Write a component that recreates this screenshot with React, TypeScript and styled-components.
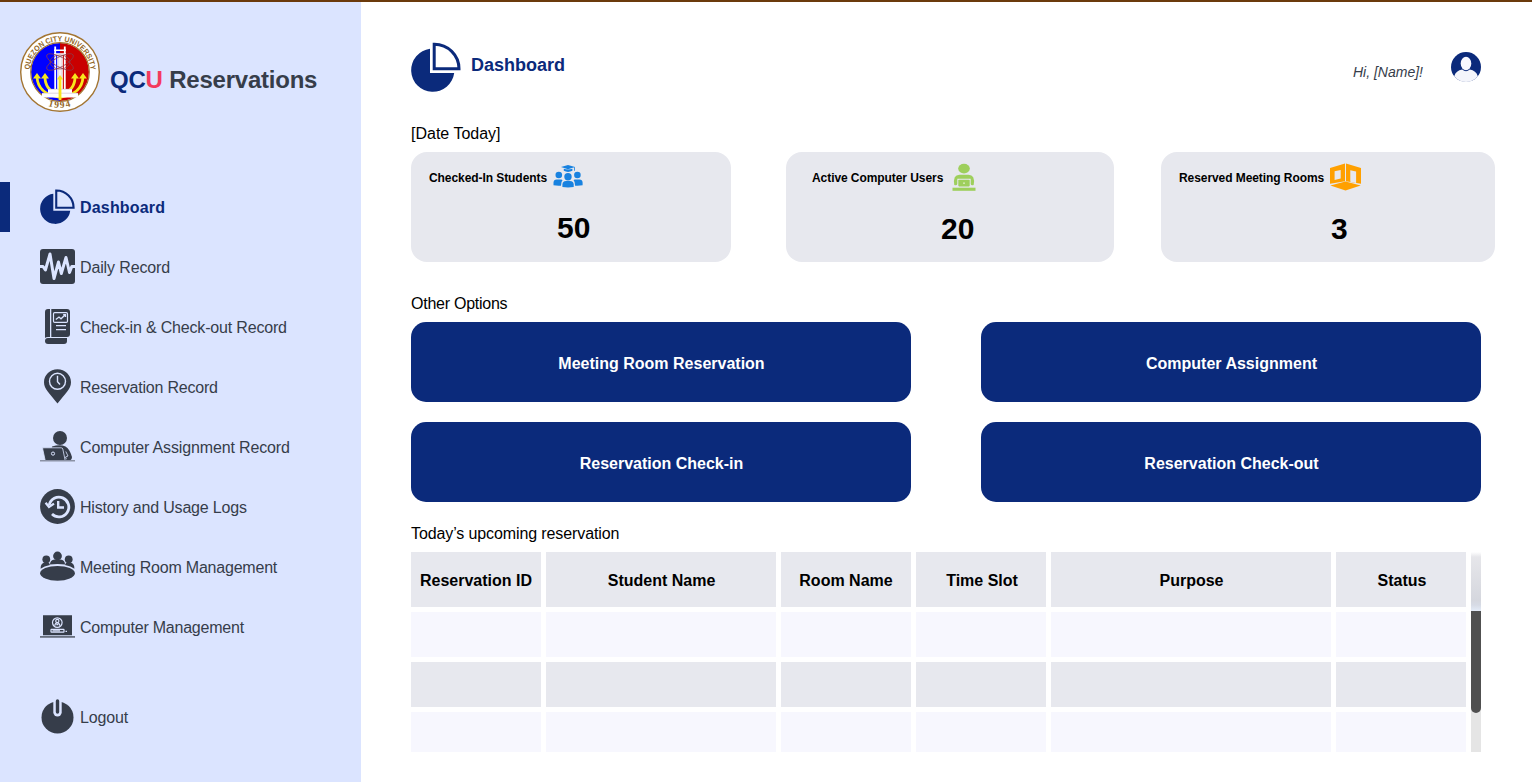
import React from "react";
import styled, { createGlobalStyle, css } from "styled-components";

const navy = "#0b2a7b";
const slate = "#363d4a";
const pale = "#dbe4ff";
const grey = "#e7e8ee";

const GlobalStyle = createGlobalStyle`
  * { box-sizing: border-box; }
  body {
    margin: 0;
    background: #fff;
    font-family: "Liberation Sans", Arial, sans-serif;
    font-size: 16px;
    line-height: 18px;
    color: #000;
    overflow: hidden;
  }
  svg { display: block; flex: none; }
`;

const Page = styled.div`
  display: flex;
  height: 782px;
  border-top: 2px solid #6b3a0c;
`;

const Sidebar = styled.aside`
  width: 361px;
  flex: none;
  background: ${pale};
`;

const Brand = styled.div`
  display: flex;
  align-items: flex-start;
  gap: 10px;
  padding: 30px 0 0 20px;
  height: 180px;
`;

const BrandName = styled.h1`
  margin: 34px 0 0;
  font-size: 24px;
  line-height: 28px;
  font-weight: bold;
  letter-spacing: -0.22px;
  color: ${slate};
  white-space: nowrap;
`;

const Tint = styled.span<{ $color: string }>`
  color: ${(p) => p.$color};
`;

const Nav = styled.nav`
  display: flex;
  flex-direction: column;
  gap: 10px;
`;

const NavItem = styled.a<{ $active?: boolean; $last?: boolean }>`
  display: flex;
  align-items: center;
  gap: 5px;
  height: 50px;
  color: ${slate};
  border-left: 10px solid transparent;
  padding-left: 30px;
  white-space: nowrap;
  ${(p) =>
    p.$active &&
    css`
      color: ${navy};
      font-weight: bold;
      border-left-color: ${navy};
    `}
  ${(p) => p.$last && css`margin-top: 30px;`}

  svg {
    margin-bottom: 1px;
  }
`;

const NavLabel = styled.span<{ $tracking: number }>`
  padding-top: 2px;
  letter-spacing: ${(p) => p.$tracking}px;
`;

const Main = styled.main`
  flex: 1;
  padding: 40px 0 0 50px;
`;

const TopBar = styled.header`
  display: flex;
  width: 1070px;
  height: 82px;
`;

const PageTitle = styled.h2`
  margin: 13px 0 0 10px;
  font-size: 18px;
  line-height: 21px;
  color: ${navy};
`;

const Greeting = styled.span`
  margin: 22px 28px 0 auto;
  font-size: 14px;
  line-height: 16px;
  font-style: italic;
  color: ${slate};
`;

const Avatar = styled.div`
  margin-top: 10px;
`;

const SectionLabel = styled.p<{ $top?: number; $tracking?: number }>`
  margin: ${(p) => p.$top ?? 0}px 0 0;
  height: 28px;
  padding-top: 1px;
  letter-spacing: ${(p) => p.$tracking ?? 0}px;
`;

const Stats = styled.div`
  display: grid;
  grid-template-columns: 320px 328px 334px;
  column-gap: 55px;
  height: 110px;

  & > :last-child {
    margin-left: -8px;
    margin-right: 8px;
  }
`;

const StatCard = styled.section<{ $inset: number }>`
  background: ${grey};
  border-radius: 16px;
  padding: 8px 0 0 ${(p) => p.$inset}px;
`;

const StatHead = styled.div<{ $gap: number }>`
  display: flex;
  align-items: center;
  gap: ${(p) => p.$gap}px;
  height: 35px;
  font-size: 12px;
  font-weight: bold;
  letter-spacing: -0.07px;
  white-space: nowrap;

  svg {
    margin-bottom: 2px;
  }
`;

const StatValue = styled.div<{ $indent: number; $top: number }>`
  padding-left: ${(p) => p.$indent}px;
  margin-top: ${(p) => p.$top}px;
  font-size: 30px;
  line-height: 34px;
  font-weight: bold;
`;

const Actions = styled.div`
  display: grid;
  grid-template-columns: 500px 500px;
  gap: 20px 70px;
`;

const ActionButton = styled.button`
  height: 80px;
  padding: 3px 0 0 1px;
  border: 0;
  border-radius: 15px;
  background: ${navy};
  color: #fff;
  font: bold 16px/18px "Liberation Sans", Arial, sans-serif;
`;

const TableFrame = styled.div`
  display: flex;
  gap: 5px;
  height: 200px;
  overflow: hidden;
`;

const Grid = styled.div`
  display: grid;
  grid-template-columns: 130px 230px 130px 130px 280px 130px;
  grid-template-rows: 55px 45px 45px 45px;
  gap: 5px;
`;

const HeadCell = styled.div<{ $shift: number }>`
  display: flex;
  align-items: center;
  justify-content: center;
  padding: 2px 0 0 ${(p) => p.$shift}px;
  background: ${grey};
  font-weight: bold;
  white-space: nowrap;
`;

const Cell = styled.div<{ $dark: boolean }>`
  background: ${(p) => (p.$dark ? grey : "#f7f7fe")};
`;

const ScrollTrack = styled.div`
  width: 10px;
  height: 200px;
  background: #e5e5e5;
`;

const ScrollCap = styled.div`
  height: 59px;
  background: linear-gradient(#fff 0, #e6e6ea 5px, #d5d7de 48px, #d7dbe5 53px, #e2e9f5 58px);
`;

const ScrollThumb = styled.div`
  height: 102px;
  background: #505050;
  border-radius: 0 0 5px 5px;
`;

const PieIcon = ({ size }: { size: number }) => (
  <svg width={size} height={size} viewBox="0 0 50 50">
    <path d="M19 6.8V31H43.2A21.6 21.6 0 1 1 19 6.8Z" fill={navy} />
    <path d="M23.2 2.2V26.8H48A24.6 24.6 0 0 0 23.2 2.2Z" fill="none" stroke={navy} strokeWidth="3" />
  </svg>
);

const WaveIcon = () => (
  <svg width="35" height="35" viewBox="0 0 35 35">
    <rect width="35" height="35" rx="3" fill={slate} />
    <path d="M0 17.5H3L5.4 21L10 5L14 29.5L18.5 13L21.3 24.5L26 8.5L29.5 23.5L31.8 17.5H35" fill="none" stroke={pale} strokeWidth="3" strokeLinejoin="round" />
  </svg>
);

const BookIcon = () => (
  <svg width="35" height="35" viewBox="0 0 35 35">
    <path d="M5 3a3 3 0 0 1 3-3H10V28H8q-2 0-3 1Z" fill={slate} />
    <path d="M11.3 0H27a3 3 0 0 1 3 3V25a3 3 0 0 1-3 3H11.3Z" fill={slate} />
    <path d="M8 29H27V32a3 3 0 0 1-3 3H8a3 3 0 0 1 0-6Z" fill={slate} />
    <rect x="13.5" y="3.6" width="14" height="9.8" rx="1.2" fill="none" stroke={pale} strokeWidth="1.2" />
    <path d="M15.8 10.6L19 8L21 9.8L25.5 5.6M23.2 5.6h2.3v2.3M16 16.6H26M16 20.6H26" fill="none" stroke={pale} strokeWidth="1.3" />
  </svg>
);

const PinClockIcon = () => (
  <svg width="35" height="35" viewBox="0 0 35 35">
    <path d="M17.5.3C10 .3 4 6 4 13.2C4 20 9.5 24 17.5 34.5C25.5 24 31 20 31 13.2C31 6 25 .3 17.5.3Z" fill={slate} />
    <circle cx="17.5" cy="12.3" r="8" fill="none" stroke={pale} strokeWidth="1.4" />
    <path d="M17.5 6.8V12.8L20 15.5" fill="none" stroke={pale} strokeWidth="1.4" />
  </svg>
);

const LaptopUserIcon = () => (
  <svg width="35" height="35" viewBox="0 0 35 35">
    <circle cx="20" cy="9" r="7" fill={slate} />
    <path d="M12 17.5Q20 15 25.5 17.5Q29.5 19.5 32 28Q32 31.5 28 31.5H10Z" fill={slate} />
    <path d="M2.7 18.8H21.2Q22.5 18.8 22.8 20L25.2 31.5H5.2L2.7 20Z" fill={slate} stroke={pale} strokeWidth=".8" />
    <circle cx="13" cy="24.6" r="1.6" fill="none" stroke={pale} strokeWidth="1" />
    <path d="M25.8 22.5L28 27L25.5 28L26.4 30.2" fill="none" stroke={pale} strokeWidth=".8" />
    <path d="M0 31.8H35" stroke="#8b92a5" strokeWidth="1.4" />
  </svg>
);

const HistoryIcon = () => (
  <svg width="35" height="35" viewBox="0 0 35 35">
    <circle cx="17.5" cy="17.5" r="17.4" fill={slate} />
    <path d="M9.2 16A9.9 9.9 0 1 1 12 25.1" fill="none" stroke={pale} strokeWidth="2.8" />
    <path d="M5.6 13.8L9 18L14 14.6" fill="none" stroke={pale} strokeWidth="2.3" />
    <path d="M18.2 12V18.5H24" fill="none" stroke={pale} strokeWidth="2.4" />
  </svg>
);

const MeetingIcon = () => (
  <svg width="35" height="35" viewBox="0 0 35 35" fill={slate}>
    <ellipse cx="17.5" cy="24.3" rx="17.4" ry="7.4" />
    <circle cx="17.5" cy="7" r="4.4" />
    <path d="M9.9 15.4Q10.2 11 14.5 10.5H20.5Q24.8 11 25.1 15.4Q17.5 14.4 9.9 15.4Z" />
    <circle cx="6.3" cy="10.3" r="3.9" />
    <circle cx="28.7" cy="10.3" r="3.9" />
    <path d="M.6 19.8Q.5 14.2 4.5 13.5H8Q9.5 13.7 10 16Q4 17.2.6 19.8ZM34.4 19.8Q34.5 14.2 30.5 13.5H27Q25.5 13.7 25 16Q31 17.2 34.4 19.8Z" />
  </svg>
);

const LaptopAdminIcon = () => (
  <svg width="35" height="35" viewBox="0 0 35 35">
    <path d="M3 6.2H32V26.2H3ZM0 27.2H35V28.8H0Z" fill={slate} />
    <path d="M0 28.3H35" stroke="#8990a2" strokeWidth="1" />
    <g fill="none" stroke={pale} strokeWidth="1.2">
      <circle cx="17.3" cy="13.6" r="4.8" />
      <circle cx="17.3" cy="12" r="1.6" />
      <path d="M14.8 16.8Q15 14 17.3 14T19.8 16.8M16.3 15.6h2" />
      <rect x="11" y="20.4" width="13" height="2.8" rx=".4" />
      <path d="M12.5 21.8H20M25.5 22.4H27" />
    </g>
  </svg>
);

const PowerIcon = () => (
  <svg width="35" height="35" viewBox="0 0 35 35">
    <circle cx="17.5" cy="18.4" r="16" fill={slate} />
    <path d="M17.5 0V13.3" stroke={pale} strokeWidth="8.4" strokeLinecap="round" />
    <path d="M17.5 2V13" stroke={slate} strokeWidth="3.4" strokeLinecap="round" />
  </svg>
);

const StudentsIcon = () => (
  <svg width="30" height="30" viewBox="0 0 30 30" fill="#1882e0">
    <path d="M15 3L22 5.1L15 7.2L8 5.1ZM10.8 6.8Q15 8.3 19.4 6.8V8.8Q15 11 10.8 8.8ZM21 5.3h.8v3.5h-.8Z" />
    <circle cx="15" cy="14.7" r="3.7" />
    <circle cx="5.8" cy="13" r="3.3" />
    <circle cx="24.4" cy="13" r="3.3" />
    <path d="M9.4 25V22.6Q9.5 19 13 19H17Q20.6 19 20.7 22.6V25Q15 25.8 9.4 25Z" />
    <path d="M.5 23.3V20.5Q.7 17.4 3.6 17.4H8.3Q9 17.5 9.5 18.2Q8 19.5 8 23.7Q4 24 .5 23.3ZM29.6 23.3V20.5Q29.4 17.4 26.5 17.4H21.8Q21 17.5 20.6 18.2Q22.1 19.5 22.1 23.7Q26 24 29.6 23.3Z" />
  </svg>
);

const ComputerUserIcon = () => (
  <svg width="30" height="30" viewBox="0 0 30 30" fill="#9ecf5c">
    <ellipse cx="15" cy="6.6" rx="5.8" ry="4.9" />
    <path d="M5.3 23Q3.6 12.7 10.5 12.7H19.5Q26.4 12.7 24.7 23Q22 23.8 21.7 22V16.8H8.3V22Q8 23.8 5.3 23Z" />
    <rect x="9.3" y="17.8" width="11.4" height="6.6" rx=".8" />
    <path d="M3.5 25.7H26.5V28.8H3.5Z" />
    <rect x="14.4" y="20.5" width="1.2" height="1.3" fill="#fff" />
  </svg>
);

const RoomIcon = () => (
  <svg width="31" height="30" viewBox="0 0 31 30">
    <path d="M0 6.1L15 1.5V19.3L0 21.7ZM31 6.1L16 1.5V19.3L31 21.7ZM.4 23.5L15.5 19.5L30.7 23.5L15.5 28.5Z" fill="#ffa000" />
    <path d="M4.6 9.3L10.7 7.9V16.5L4.6 17.9ZM20.3 8.2L26.1 9.6V20.9L20.3 19.8Z" fill={grey} />
  </svg>
);

const AvatarIcon = () => (
  <svg width="30" height="30" viewBox="0 0 30 30">
    <circle cx="15" cy="15" r="15" fill={navy} />
    <path d="M3.2 24.2Q5 18.6 11.2 17.6Q15 20.8 18.8 17.6Q25 18.6 26.8 24.2Q22 30 15 30T3.2 24.2Z" fill="#f4f5fb" />
    <ellipse cx="15" cy="11.5" rx="5.3" ry="6.7" fill="#f8f8ff" />
  </svg>
);

const Seal = () => (
  <svg width="80" height="80" viewBox="0 0 80 80">
    <defs>
      <path id="seal-top" d="M10 45.3A30.5 30.5 0 1 1 70 45.3" />
      <path id="seal-bottom" d="M18 68.3A36 36 0 0 0 62 68.3" />
    </defs>
    <circle cx="40" cy="40" r="39.3" fill="#fff" stroke="#a37532" strokeWidth="1.4" />
    <path d="M40 11A29 29 0 0 0 40 69Z" fill="#00f" />
    <path d="M40 11A29 29 0 0 1 40 69Z" fill="#c90000" />
    <circle cx="40" cy="40" r="29.3" fill="none" stroke="#a37532" strokeWidth="1.2" />
    <g fill="none" stroke="#f8e71c" strokeWidth="2.8">
      <path d="M17 45Q18 62 39 65M25 45Q25 58 38 62M63 45Q62 62 41 65M55 45Q55 58 42 62" />
    </g>
    <path d="M13 46.5L17 41L21 46.5ZM21 46.5L25 41L29 46.5ZM67 46.5L63 41L59 46.5ZM59 46.5L55 41L51 46.5Z" fill="#f8e71c" />
    <path d="M34.3 14.5h1.8v44h-1.8ZM43.9 14.5h1.8v44h-1.8ZM34 17.5h12v1.6H34ZM34 21.3h12v1.6H34ZM37.2 22h5.6v36h-5.6ZM28 57H52V61H28ZM22 61H58V65.5H22Z" fill="#fff" />
    <path d="M22 61.2H58M28 57.2H52M38.8 24V46M41.2 24V46" stroke="#bda7b8" strokeWidth=".5" />
    <g fill="none" stroke="#8b3b4b" strokeWidth=".7">
      <ellipse cx="40" cy="30" rx="15" ry="5" transform="rotate(28 40 30)" />
      <ellipse cx="40" cy="30" rx="15" ry="5" transform="rotate(-28 40 30)" />
      <ellipse cx="40" cy="30" rx="10" ry="7" />
    </g>
    <path d="M38.6 47h2.8v21h-2.8ZM36.8 47.5L40 43L43.2 47.5Z" fill="#f8e71c" />
    <g fill="#936727" fontFamily="Liberation Sans, Arial, sans-serif" fontWeight="bold">
      <text fontSize="7.6" textLength="92" lengthAdjust="spacingAndGlyphs">
        <textPath href="#seal-top" startOffset="7.5">QUEZON CITY UNIVERSITY</textPath>
      </text>
      <text fontSize="9.5" fontFamily="Liberation Serif, serif" letterSpacing="1.3" textAnchor="middle">
        <textPath href="#seal-bottom" startOffset="50%">1994</textPath>
      </text>
    </g>
  </svg>
);

const links = [
  { label: "Dashboard", icon: <PieIcon size={35} />, tracking: 0.18, active: true },
  { label: "Daily Record", icon: <WaveIcon />, tracking: -0.13 },
  { label: "Check-in & Check-out Record", icon: <BookIcon />, tracking: -0.18 },
  { label: "Reservation Record", icon: <PinClockIcon />, tracking: -0.2 },
  { label: "Computer Assignment Record", icon: <LaptopUserIcon />, tracking: -0.14 },
  { label: "History and Usage Logs", icon: <HistoryIcon />, tracking: -0.18 },
  { label: "Meeting Room Management", icon: <MeetingIcon />, tracking: -0.21 },
  { label: "Computer Management", icon: <LaptopAdminIcon />, tracking: -0.22 },
  { label: "Logout", icon: <PowerIcon />, tracking: -0.15, last: true },
];

const stats = [
  { label: "Checked-In Students", value: 50, icon: <StudentsIcon />, inset: 18, gap: 6, indent: 128, top: 16 },
  { label: "Active Computer Users", value: 20, icon: <ComputerUserIcon />, inset: 26, gap: 6, indent: 129, top: 17 },
  { label: "Reserved Meeting Rooms", value: 3, icon: <RoomIcon />, inset: 18, gap: 6, indent: 152, top: 17 },
];

const actions = ["Meeting Room Reservation", "Computer Assignment", "Reservation Check-in", "Reservation Check-out"];
const columns = [
  { label: "Reservation ID", shift: 0 },
  { label: "Student Name", shift: 1 },
  { label: "Room Name", shift: 0 },
  { label: "Time Slot", shift: 2 },
  { label: "Purpose", shift: 1 },
  { label: "Status", shift: 2 },
];
const rows = [0, 1, 2];

export default function App() {
  return (
    <>
      <GlobalStyle />
      <Page>
        <Sidebar>
          <Brand>
            <Seal />
            <BrandName>
              <Tint $color={navy}>QC</Tint>
              <Tint $color="#f33a5e">U</Tint> Reservations
            </BrandName>
          </Brand>
          <Nav>
            {links.map((l) => (
              <NavItem key={l.label} $active={l.active} $last={l.last}>
                {l.icon}
                <NavLabel $tracking={l.tracking}>{l.label}</NavLabel>
              </NavItem>
            ))}
          </Nav>
        </Sidebar>
        <Main>
          <TopBar>
            <PieIcon size={50} />
            <PageTitle>Dashboard</PageTitle>
            <Greeting>Hi, [Name]!</Greeting>
            <Avatar>
              <AvatarIcon />
            </Avatar>
          </TopBar>
          <SectionLabel>[Date Today]</SectionLabel>
          <Stats>
            {stats.map((s) => (
              <StatCard key={s.label} $inset={s.inset}>
                <StatHead $gap={s.gap}>
                  {s.label}
                  {s.icon}
                </StatHead>
                <StatValue $indent={s.indent} $top={s.top}>
                  {s.value}
                </StatValue>
              </StatCard>
            ))}
          </Stats>
          <SectionLabel $top={32} $tracking={-0.25}>Other Options</SectionLabel>
          <Actions>
            {actions.map((a) => (
              <ActionButton key={a}>{a}</ActionButton>
            ))}
          </Actions>
          <SectionLabel $top={22} $tracking={-0.11}>Today’s upcoming reservation</SectionLabel>
          <TableFrame>
            <Grid>
              {columns.map((c) => (
                <HeadCell key={c.label} $shift={c.shift}>{c.label}</HeadCell>
              ))}
              {rows.map((r) => columns.map((c) => <Cell key={r + c.label} $dark={r % 2 === 1} />))}
            </Grid>
            <ScrollTrack>
              <ScrollCap />
              <ScrollThumb />
            </ScrollTrack>
          </TableFrame>
        </Main>
      </Page>
    </>
  );
}
